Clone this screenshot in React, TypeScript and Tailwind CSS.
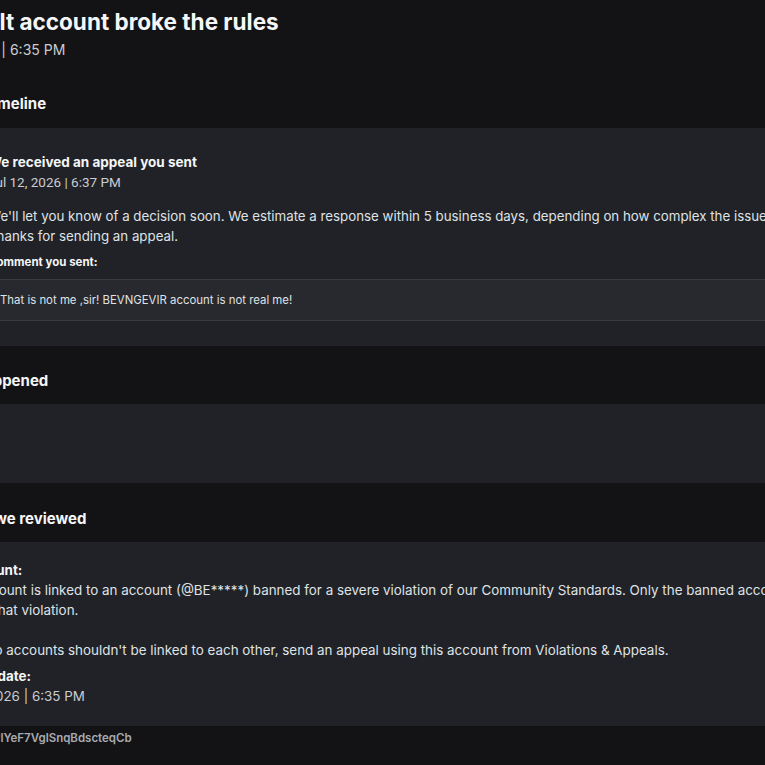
import { Check } from "lucide-react";

function SectionTitle({ children, className }: { children: React.ReactNode; className: string }) {
  return (
    <h2 className={"pl-[30px] text-[15px] leading-6 font-bold text-[#f5f6f7] " + className}>
      {children}
    </h2>
  );
}

export default function App() {
  return (
    <div className="h-[765px] w-[765px] overflow-hidden bg-[#131316] font-['Inter',sans-serif] text-[#dfe2e6]">
      <div className="-ml-[98px] w-[1000px] pt-[6px]">
        <h1 className="text-[22.5px] leading-8 font-bold text-[#f5f6f7]">Your adult account broke the rules</h1>
        <p className="mt-[2px] pl-[15px] text-[14px] leading-5 text-[#c9ccd1]">Jul 12, 2026 | 6:35 PM</p>

        <SectionTitle className="mt-[32px] mb-[12px]">Appeal timeline</SectionTitle>
        <div className="ml-[22px] w-[960px] bg-[#212227] px-4 pt-[24px] pb-[25px]">
          <div className="flex gap-4">
            <div className="flex h-8 w-8 shrink-0 items-center justify-center rounded-full bg-[#2d88ff]">
              <Check className="h-4 w-4 text-white" />
            </div>
            <div className="w-[860px]">
              <p className="pt-px text-[13.5px] leading-[18px] font-bold text-[#f5f6f7]">We received an appeal you sent</p>
              <p className="mt-[1px] font-['Roboto',sans-serif] text-[13.5px] leading-5 text-[#c9ccd1]">
                Jul 12, 2026 | 6:37 PM
              </p>
              <p className="mt-[14px] text-[13.3px] leading-5">
                We'll let you know of a decision soon. We estimate a response within 5 business days, depending on how complex the issue is.
                <br />
                Thanks for sending an appeal.
              </p>
              <p className="mt-2 text-[11.5px] leading-4 font-bold text-[#f5f6f7]">Comment you sent:</p>
              <div className="mt-[9px] border-y border-[#3a3b40] bg-[#28292e] px-3 py-[12px] text-[11.4px] leading-4">
                That is not me ,sir! BEVNGEVIR account is not real me!
              </div>
            </div>
          </div>
        </div>

        <SectionTitle className="mt-[23px] mb-[11px]">What happened</SectionTitle>
        <div className="ml-[22px] h-[79px] w-[960px] bg-[#212227]" />

        <SectionTitle className="mt-[24px] mb-[11px]">Content we reviewed</SectionTitle>
        <div className="ml-[22px] w-[960px] bg-[#212227] pt-[18px] pb-[20px] pl-[19px] text-[13.4px] leading-5">
          <div className="w-[885px]">
            <p className="font-bold text-[#f5f6f7]">An account:</p>
            <p>
              Your account is linked to an account (@BE*****) banned for a severe violation of our Community Standards. Only the banned account can dispute that violation.
            </p>
            <p className="mt-5">
              If the two accounts shouldn't be linked to each other, send an appeal using this account from Violations &amp; Appeals.
            </p>
            <p className="mt-[6px] font-bold text-[#f5f6f7]">Original date:</p>
            <p className="text-[#c9ccd1]">Jul 12, 2026 | 6:35 PM</p>
          </div>
        </div>

        <p className="mt-1 pl-[45px] text-[11.5px] leading-4 font-semibold text-[#a8abb1]">ID: 9kT2PlYeF7VglSnqBdscteqCb</p>
      </div>
    </div>
  );
}
